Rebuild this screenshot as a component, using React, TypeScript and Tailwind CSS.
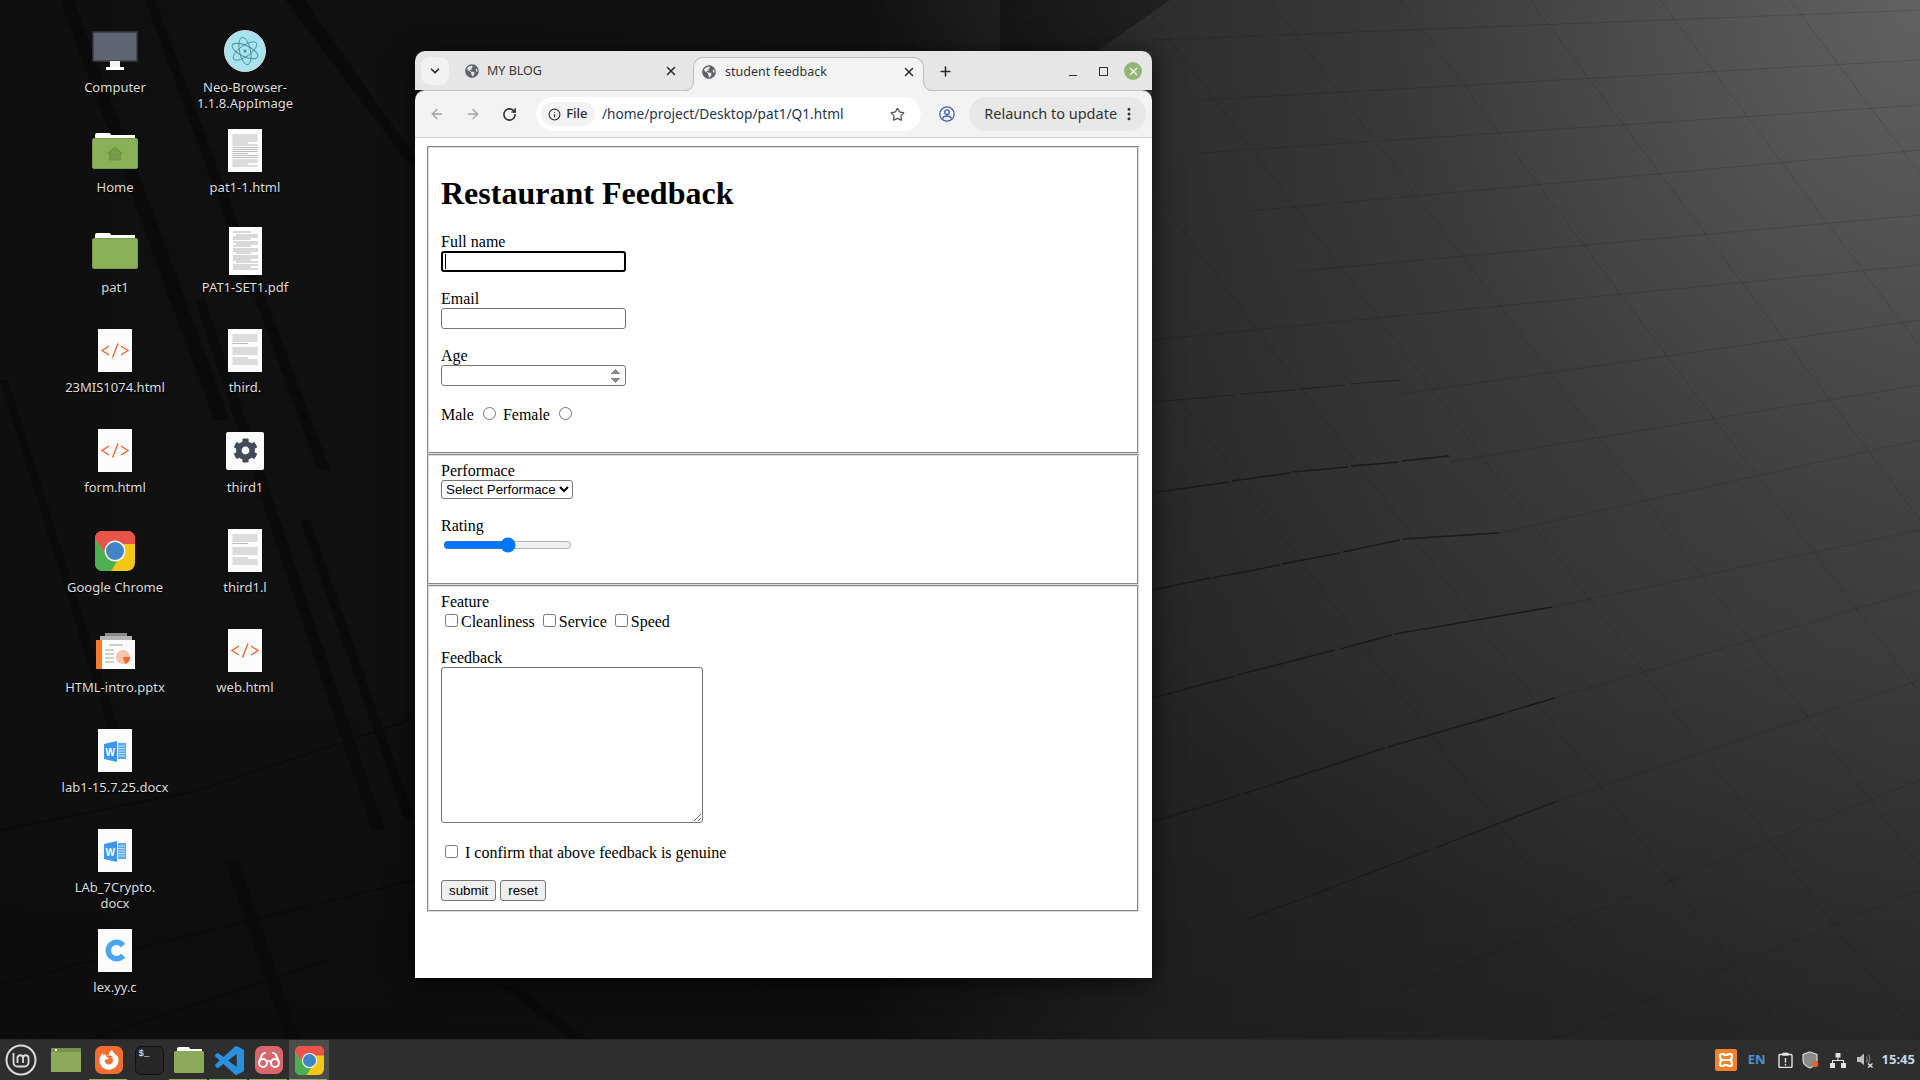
import { ArrowLeft, ArrowRight, ChevronDown, EllipsisVertical, Info, Plus, RotateCw, Star, X } from "lucide-react";
import { FaCog, FaFirefoxBrowser, FaGlobeAmericas } from "react-icons/fa";
import { LuGlasses } from "react-icons/lu";

const uiFont = "font-['Noto_Sans',sans-serif]";

function Wallpaper() {
  // cross lines of the tiled floor on the right half
  const rows = [
    [1152, 40, 1920, 10], [1200, 100, 1920, 60], [1200, 153, 1920, 105], [1250, 211, 1920, 150],
    [1300, 271, 1920, 215], [1152, 340, 1920, 265], [1399, 394, 1920, 320], [1449, 462, 1920, 385],
    [1499, 533, 1920, 440], [1552, 607, 1920, 530], [1555, 698, 1920, 590], [1557, 801, 1920, 680],
    [1400, 990, 1920, 780], [1550, 1040, 1920, 890],
  ];
  const cols = [1000, 1130, 1260, 1390, 1520, 1650, 1780, 1910, 2040, 2170, 2300, 2430, 2560];
  return (
    <svg className="absolute inset-0" width="1920" height="1080">
      <defs>
        <linearGradient id="wall" x1="0" x2="1" y1="0" y2="0">
          <stop offset="0" stopColor="#0f0f0f" />
          <stop offset="0.45" stopColor="#111111" />
          <stop offset="0.6" stopColor="#242424" />
          <stop offset="1" stopColor="#303030" />
        </linearGradient>
        <radialGradient id="shine" gradientUnits="userSpaceOnUse" cx="1920" cy="0" r="1050">
          <stop offset="0" stopColor="#ffffff" stopOpacity="0.24" />
          <stop offset="0.5" stopColor="#ffffff" stopOpacity="0.08" />
          <stop offset="1" stopColor="#ffffff" stopOpacity="0" />
        </radialGradient>
        <linearGradient id="fade" x1="0" x2="0" y1="0" y2="1">
          <stop offset="0.6" stopColor="#000000" stopOpacity="0" />
          <stop offset="1" stopColor="#000000" stopOpacity="0.2" />
        </linearGradient>
      </defs>
      <rect width="1920" height="1080" fill="url(#wall)" />
      <rect width="1920" height="1080" fill="url(#shine)" />
      <rect width="1920" height="1080" fill="url(#fade)" />
      <polygon points="1000,0 1170,0 1070,70 1000,100" fill="#000" opacity="0.3" />

      {/* dark strips on the left */}
      <g fill="#0a0a0a">
        <polygon points="60,0 74,0 230,420 214,420" />
        <polygon points="285,0 305,0 420,165 410,165" />
        <polygon points="145,0 155,0 330,470 318,470" />
        <polygon points="195,300 205,300 385,830 372,830" />
        <polygon points="0,380 8,380 128,760 118,760" />
        <polygon points="300,520 310,520 415,820 405,820" />
        <polygon points="500,985 515,985 590,1040 572,1040" />
        <polygon points="225,860 238,860 300,1040 286,1040" />
      </g>
      <g stroke="#0a0a0a" strokeWidth="1.5" fill="none">
        <path d="M0 830 L200 790 L410 720" />
        <path d="M0 985 L150 945 L415 880" />
        <path d="M90 1040 L330 960" />
      </g>

      {/* tile lines */}
      <g stroke="#000" strokeOpacity="0.13" strokeWidth="1">
        {rows.map(([x1, y1, x2, y2]) => (
          <line key={y1} x1={x1} y1={y1} x2={x2} y2={y2} />
        ))}
        {cols.map((x) => (
          <line key={x} x1={x - 120} y1={0} x2={x + 660} y2={1040} />
        ))}
      </g>

      {/* heavier ledges */}
      <g stroke="#1a1a1a" strokeWidth="1.6" fill="none">
        <path d="M1158 492 L1229 482 M1232 481 L1290 473 M1293 472 L1348 467 M1351 466 L1399 462 M1402 461 L1449 456" />
        <path d="M1152 590 L1210 578 M1212 578 L1280 565 M1282 564 L1340 553 M1343 552 L1400 540 M1403 539 L1499 533" />
        <path d="M1152 698 L1235 676 M1237 675 L1335 650 M1340 649 L1392 635 M1395 634 L1552 607" />
        <path d="M1152 822 L1240 795 M1243 794 L1385 748 M1388 747 L1505 713 M1507 712 L1555 698" />
        <path d="M1246 920 L1430 850 M1435 848 L1557 801" strokeWidth="1.3" />
      </g>
      <path d="M1152 402 L1235 395 M1240 394 L1295 390 M1300 389 L1345 385 M1350 384 L1399 380" stroke="#202020" strokeWidth="1" />
    </svg>
  );
}

function DocIcon({ dense }: { dense?: boolean }) {
  const lines = dense
    ? [6, 8, 10, 12, 14.5, 19, 21, 23, 25, 29, 31, 33, 35]
    : [6, 8, 10, 12, 14, 16, 18.5, 20.5, 22.5, 24.5, 26.5, 28.5, 31, 33, 35, 37];
  return (
    <svg width="34" height="43" viewBox="0 0 34 43">
      <rect width="34" height="43" fill="#fcfcfc" />
      {lines.map((y, i) => (
        <line key={y} x1="4.5" x2={i % 5 === 4 ? 20 : 29.5} y1={y} y2={y} stroke="#b4b4b4" strokeWidth="0.9" />
      ))}
    </svg>
  );
}

function PdfIcon() {
  const lines = [3, 6, 8, 10, 13, 15, 17, 20, 22, 24, 27, 29, 31, 33, 36, 38, 40];
  return (
    <svg width="33" height="48" viewBox="0 0 33 48">
      <rect width="33" height="48" fill="#fff" />
      {lines.map((y, i) => (
        <line key={y} x1={i % 4 === 1 ? 7 : 4} x2={i % 3 === 0 ? 22 : 29} y1={y + 2} y2={y + 2} stroke="#a0a0a0" strokeWidth="0.8" />
      ))}
    </svg>
  );
}

function HtmlIcon() {
  return (
    <svg width="34" height="43" viewBox="0 0 34 43">
      <rect width="34" height="43" fill="#fcfcfc" />
      <g stroke="#f1652f" strokeWidth="1.4" fill="none">
        <path d="M11 17 L4 21.5 L11 26" />
        <path d="M23 17 L30 21.5 L23 26" />
        <path d="M20 14.5 L14.5 28.5" />
      </g>
    </svg>
  );
}

function WordIcon() {
  return (
    <svg width="34" height="43" viewBox="0 0 34 43">
      <rect width="34" height="43" fill="#fcfcfc" />
      <path d="M6 15 L19 12 V33 L6 30 Z" fill="#3f97ea" />
      <path d="M20 14 H28 V30 H20 Z" fill="#5aa8ee" />
      <g stroke="#d7eafa" strokeWidth="0.9">
        {[17, 19.5, 22, 24.5, 27].map((y) => (
          <line key={y} x1="20" x2="27" y1={y} y2={y} />
        ))}
      </g>
      <text x="7.5" y="26.5" fontSize="10" fontWeight="700" fill="#fff" fontFamily="Liberation Sans, sans-serif">W</text>
    </svg>
  );
}

function CIcon() {
  return (
    <svg width="34" height="43" viewBox="0 0 34 43">
      <rect width="34" height="43" fill="#fcfcfc" />
      <path d="M25 16.5 A8.2 8.2 0 1 0 25 26.5" stroke="#4aa5f5" strokeWidth="5.5" fill="none" />
    </svg>
  );
}

function FolderIcon({ home }: { home?: boolean }) {
  return (
    <svg width="46" height="38" viewBox="0 0 46 38">
      <path d="M3 6 V3 Q3 1 5 1 H17 Q19 1 19 3 H43 V8 H3 Z" fill="#fff" />
      <rect x="0.5" y="6.5" width="45" height="30" rx="1.5" fill="#8bb158" stroke="#769a48" />
      {home && <path d="M23 15 L30 21 H28.5 V28 H17.5 V21 H16 Z" fill="#769a48" stroke="#66883d" strokeWidth="0.7" />}
    </svg>
  );
}

function ComputerIcon() {
  return (
    <svg width="46" height="40" viewBox="0 0 46 40">
      <rect x="1" y="1" width="44" height="29" fill="#5f6472" stroke="#383b45" strokeWidth="1.5" />
      <path d="M18 30 H28 V36 H18 Z" fill="#f4f4f4" />
      <rect x="14" y="36" width="18" height="3" fill="#fff" />
    </svg>
  );
}

function ElectronIcon() {
  return (
    <svg width="42" height="42" viewBox="0 0 42 42">
      <circle cx="21" cy="21" r="20.5" fill="#a8e3ef" stroke="#d9d9d9" />
      <g stroke="#4c8d9f" strokeWidth="0.9" fill="none">
        <ellipse cx="21" cy="21" rx="14" ry="5.5" transform="rotate(25 21 21)" />
        <ellipse cx="21" cy="21" rx="14" ry="5.5" transform="rotate(-35 21 21)" />
        <ellipse cx="21" cy="21" rx="5.5" ry="14" transform="rotate(-12 21 21)" />
      </g>
      <circle cx="21" cy="21" r="1.5" fill="#4c8d9f" />
    </svg>
  );
}

function ChromeIcon({ size }: { size: number }) {
  return (
    <svg width={size} height={size} viewBox="0 0 40 40">
      <rect width="40" height="40" rx="8" fill="#f5c518" />
      <path d="M0 8 Q0 0 8 0 H32 Q40 0 40 8 V13 H20 L12 25 L0 8 Z" fill="#e8534a" />
      <path d="M0 8 L13 26 L23 29 L16 40 H8 Q0 40 0 32 Z" fill="#4caf50" />
      <circle cx="20" cy="20" r="10.5" fill="#f4f4f4" />
      <circle cx="20" cy="20" r="9" fill="#4285c4" />
    </svg>
  );
}

function PptIcon() {
  return (
    <svg width="39" height="36" viewBox="0 0 39 36">
      <rect x="9" y="0" width="22" height="5" fill="#8a8a8a" />
      <rect x="4" y="3" width="32" height="5" fill="#b5b5b5" />
      <rect x="0" y="7" width="39" height="29" fill="#fafafa" />
      <rect x="0" y="7" width="6" height="29" fill="#f47b2a" />
      <g stroke="#9a9a9a" strokeWidth="0.9">
        <line x1="13" x2="27" y1="12" y2="12" />
        <line x1="9" x2="18" y1="17" y2="17" />
        <line x1="9" x2="18" y1="21" y2="21" />
        <line x1="9" x2="18" y1="25" y2="25" />
        <line x1="9" x2="18" y1="29" y2="29" />
      </g>
      <circle cx="27" cy="24" r="7" fill="#f6c4aa" />
      <path d="M27 24 H34 A7 7 0 0 1 29 31 Z" fill="#f0682e" />
    </svg>
  );
}

function GearIcon() {
  return (
    <div className="flex h-[38px] w-[38px] items-center justify-center rounded-[2px] bg-[#fbfbfb]">
      <FaCog size={25} color="#414b5a" />
    </div>
  );
}

function DesktopItem({ icon, label }: { icon: React.ReactNode; label: React.ReactNode }) {
  return (
    <div className="flex h-[100px] w-[130px] flex-col items-center pt-[26px]">
      <div className="flex h-[49px] shrink-0 items-center justify-center">{icon}</div>
      <div className="mt-[4px] shrink-0 text-center text-[13px] leading-[16px] text-[#dcdcdc] [text-shadow:0_1px_1px_#000]">{label}</div>
    </div>
  );
}

function DesktopIcons() {
  const left = [
    { icon: <ComputerIcon />, label: "Computer" },
    { icon: <FolderIcon home />, label: "Home" },
    { icon: <FolderIcon />, label: "pat1" },
    { icon: <HtmlIcon />, label: "23MIS1074.html" },
    { icon: <HtmlIcon />, label: "form.html" },
    { icon: <ChromeIcon size={40} />, label: "Google Chrome" },
    { icon: <PptIcon />, label: "HTML-intro.pptx" },
    { icon: <WordIcon />, label: "lab1-15.7.25.docx" },
    { icon: <WordIcon />, label: <>LAb_7Crypto.<br />docx</> },
    { icon: <CIcon />, label: "lex.yy.c" },
  ];
  const right = [
    { icon: <ElectronIcon />, label: <>Neo-Browser-<br />1.1.8.AppImage</> },
    { icon: <DocIcon />, label: "pat1-1.html" },
    { icon: <PdfIcon />, label: "PAT1-SET1.pdf" },
    { icon: <DocIcon dense />, label: "third." },
    { icon: <GearIcon />, label: "third1" },
    { icon: <DocIcon dense />, label: "third1.l" },
    { icon: <HtmlIcon />, label: "web.html" },
  ];
  return (
    <div className={`relative flex flex-1 pl-[50px] ${uiFont}`}>
      <div>
        {left.map((item, i) => (
          <DesktopItem key={i} icon={item.icon} label={item.label} />
        ))}
      </div>
      <div>
        {right.map((item, i) => (
          <DesktopItem key={i} icon={item.icon} label={item.label} />
        ))}
      </div>
    </div>
  );
}

function TabFlare({ side }: { side: "left" | "right" }) {
  return (
    <svg
      className={`absolute bottom-0 ${side === "left" ? "-left-[10px]" : "-right-[10px] -scale-x-100"}`}
      width="10"
      height="10"
      viewBox="0 0 10 10"
    >
      <path d="M10 0 V10 H0 Q9.5 10 9.5 0 Z" fill="#f3f3f3" />
      <path d="M0 9.5 Q9.5 9.5 9.5 0" fill="none" stroke="#bdbdbd" />
    </svg>
  );
}

function BrowserChrome() {
  return (
    <div className={`text-[#2b2b2b] ${uiFont}`}>
      <div className="flex h-[39px] items-end rounded-t-[10px] bg-[#e6e6e6] pl-[6px]">
        <div className="mb-[5px] flex h-[28px] w-[28px] items-center justify-center rounded-[9px] bg-[#f2f2f2]">
          <ChevronDown size={14} strokeWidth={3} />
        </div>
        <div className="mb-[5px] flex h-[28px] w-[244px] items-center pl-[16px] pr-[15px]">
          <FaGlobeAmericas size={14} color="#5f6368" />
          <span className="ml-[8px] flex-1 text-[12.5px] text-[#3a3a3a]">MY BLOG</span>
          <X size={14} strokeWidth={2.5} />
        </div>
        <div className="relative z-10 -mb-px flex h-[34px] w-[231px] items-center rounded-t-[10px] border border-b-0 border-[#bdbdbd] bg-[#f3f3f3] pb-[5px] pl-[8px] pr-[7px]">
          <TabFlare side="left" />
          <TabFlare side="right" />
          <FaGlobeAmericas size={14} color="#5f6368" />
          <span className="ml-[9px] flex-1 text-[12.5px] text-[#333]">student feedback</span>
          <X size={14} strokeWidth={2.5} />
        </div>
        <div className="mb-[11px] ml-[14px]">
          <Plus size={15} strokeWidth={2.5} />
        </div>
        <div className="mb-[5px] ml-auto flex h-[28px] items-center pr-[10px]">
          <div className="mt-[9px] h-[1.5px] w-[8px] bg-[#333]" />
          <div className="ml-[22px] h-[9px] w-[9px] border border-[#333]" />
          <div className="ml-[16px] flex h-[18px] w-[18px] items-center justify-center rounded-full bg-[#94b573]">
            <X size={13} strokeWidth={2} color="#fff" />
          </div>
        </div>
      </div>

      <div className="flex h-[48px] items-center rounded-t-[10px] border-y border-t-[#c2c2c2] border-b-[#cfcfcf] bg-[#f3f3f3] pl-[14px] pr-[6px]">
        <ArrowLeft size={16} color="#a3a3a3" />
        <ArrowRight size={16} color="#a3a3a3" className="ml-[20px]" />
        <RotateCw size={15} strokeWidth={2.5} color="#2f2f2f" className="ml-[21px]" />
        <div className="ml-[19px] flex h-[34px] w-[386px] items-center rounded-full bg-white pl-[5px] pr-[16px]">
          <div className="flex h-[24px] w-[54px] items-center justify-center gap-[5px] rounded-full bg-[#f3f3f3] text-[13px] font-medium">
            <Info size={13} />
            File
          </div>
          <span className="ml-[7px] flex-1 text-[13.7px] text-[#1f3550]">/home/project/Desktop/pat1/Q1.html</span>
          <Star size={15} color="#555" />
        </div>
        <svg className="ml-[18px]" width="16" height="16" viewBox="0 0 16 16" fill="none" stroke="#3f63ad" strokeWidth="1.3">
          <circle cx="8" cy="8" r="7.2" />
          <circle cx="8" cy="6.2" r="2.3" />
          <path d="M3.5 12.6 Q4.5 10 8 10 T12.5 12.6" />
        </svg>
        <div className="ml-[14px] flex h-[34px] w-[177px] items-center rounded-full bg-[#e8e8e8] pl-[15px] text-[14.5px] text-[#333]">
          <span className="flex-1">Relaunch to update</span>
          <EllipsisVertical size={16} strokeWidth={2.5} className="mr-[9px]" />
        </div>
      </div>
    </div>
  );
}

function FeedbackPage() {
  const fieldset = "[border:2px_groove_#dcdcdc] px-[12px] pt-[5.6px] min-w-0";
  const textInput = "w-[185px] h-[21px] border border-[#767676] rounded-[3px] bg-white";
  const radio = "[margin:3px_3px_0px_5px]";
  const check = "[margin:3px_3px_3px_4px]";
  const button = "h-[21px] border border-[#767676] rounded-[3px] bg-[#efefef] px-[7px] text-[13.333px] font-['Liberation_Sans',sans-serif]";
  return (
    <div className="flex-1 bg-white pl-[12px] pr-[13px] pt-[8px] font-['Liberation_Serif',serif] text-[16px] text-black [line-height:normal]">
      <form>
        <fieldset className={`${fieldset} pb-[10px]`}>
          <h1 className="my-[21.44px] text-[32px] font-bold [line-height:normal]">Restaurant Feedback</h1>
          <label>Full name</label>
          <br />
          <span className="relative inline-block h-[21px] align-bottom">
            <input type="text" className="h-[21px] w-[185px] rounded-[3px] border-2 border-black bg-white align-top" />
            <span className="absolute left-[4px] top-[3px] h-[15px] w-px bg-black" />
          </span>
          <br />
          <br />
          <label>Email</label>
          <br />
          <input type="email" className={`${textInput} align-bottom`} />
          <br />
          <br />
          <label>Age</label>
          <br />
          <input type="number" className={`${textInput} align-bottom [&::-webkit-inner-spin-button]:mr-[2px] [&::-webkit-inner-spin-button]:opacity-100`} />
          <br />
          <br />
          <label>Male</label> <input type="radio" name="g" className={radio} /> <label>Female</label>{" "}
          <input type="radio" name="g" className={radio} />
          <br />
          <br />
        </fieldset>
        <fieldset className={`${fieldset} pb-[8.4px]`}>
          <label>Performace</label>
          <br />
          <select className="w-[132px] rounded-[3px] border border-[#767676] bg-white font-['Liberation_Sans',sans-serif] text-[13.333px]">
            <option>Select Performace</option>
          </select>
          <br />
          <br />
          <label>Rating</label>
          <br />
          <input type="range" className="[margin:2px]" />
          <br />
          <br />
        </fieldset>
        <fieldset className={`${fieldset} pb-[9px]`}>
          <label>Feature</label>
          <br />
          <input type="checkbox" className={check} />
          Cleanliness <input type="checkbox" className={check} />
          Service <input type="checkbox" className={check} />
          Speed
          <br />
          <br />
          <label>Feedback</label>
          <br />
          <textarea className="h-[156px] w-[262px] rounded-[3px] border border-[#767676] bg-white align-text-bottom" />
          <br />
          <br />
          <input type="checkbox" className={check} /> I confirm that above feedback is genuine
          <br />
          <br />
          <button type="button" className={button}>submit</button>{" "}
          <button type="button" className={button}>reset</button>
        </fieldset>
      </form>
    </div>
  );
}

function TaskIcon({ children, underline, active }: { children: React.ReactNode; underline?: boolean; active?: boolean }) {
  return (
    <div className={`relative flex h-[41px] w-[40px] items-center justify-center ${active ? "bg-[#4c4c4c]" : ""}`}>
      {children}
      {underline && <div className="absolute bottom-0 left-0 h-[2px] w-[38px] bg-[#8dae62]" />}
    </div>
  );
}

function Taskbar() {
  return (
    <div className={`relative flex h-[41px] items-center border-t border-[#262626] bg-[#2e2e2e] ${uiFont}`}>
      <div className="flex w-[49px] justify-center pr-[7px]">
        <svg width="32" height="32" viewBox="0 0 32 32" fill="none" stroke="#dcdcdc">
          <circle cx="16" cy="16" r="14.5" strokeWidth="2" />
          <path d="M8.5 9 V18.5 A4 4 0 0 0 12.5 22.5 H19.5 A4 4 0 0 0 23.5 18.5 V13.5 A2.8 2.8 0 0 0 18 13.5 V19 M18 13.5 A2.8 2.8 0 0 0 12.5 13.5 V19" strokeWidth="1.8" />
        </svg>
      </div>
      <TaskIcon>
        <svg width="30" height="24" viewBox="0 0 30 24" className="-ml-[6px]">
          <rect width="30" height="24" fill="#8bab5b" />
          <rect width="30" height="4" fill="#75934c" />
          <rect x="4" y="1" width="2" height="2" fill="#fff" />
        </svg>
      </TaskIcon>
      <TaskIcon underline>
        <div className="flex h-[28px] w-[28px] items-center justify-center rounded-[7px] bg-[#f46d30]">
          <FaFirefoxBrowser size={20} color="#fff" />
        </div>
      </TaskIcon>
      <TaskIcon>
        <div className="h-[29px] w-[29px] rounded-[6px] border border-[#111] bg-[#272727] pl-[3px] pt-[1px] font-['Liberation_Mono',monospace] text-[9px] leading-[12px] text-white">$_</div>
      </TaskIcon>
      <TaskIcon underline>
        <svg width="30" height="26" viewBox="0 0 30 26">
          <path d="M3 5 V2 Q3 0 5 0 H14 Q16 0 16 2 H28 V6 H3 Z" fill="#fff" />
          <rect y="4" width="30" height="22" rx="1.5" fill="#8bab5b" />
        </svg>
      </TaskIcon>
      <TaskIcon underline>
        <svg width="29" height="29" viewBox="0 0 24 24">
          <path fill="#2a8fdc" d="M23.15 2.587L18.21.21a1.494 1.494 0 0 0-1.705.29l-9.46 8.63-4.12-3.128a.999.999 0 0 0-1.276.057L.327 7.261A1 1 0 0 0 .326 8.74L3.899 12 .326 15.26a1 1 0 0 0 .001 1.479L1.65 17.94a.999.999 0 0 0 1.276.057l4.12-3.128 9.46 8.63a1.492 1.492 0 0 0 1.704.29l4.942-2.377A1.5 1.5 0 0 0 24 20.06V3.939a1.5 1.5 0 0 0-.85-1.352zm-5.146 14.861L10.826 12l7.178-5.448v10.896z" />
        </svg>
      </TaskIcon>
      <TaskIcon underline>
        <div className="flex h-[28px] w-[28px] items-center justify-center rounded-[7px] bg-[#d9666a]">
          <LuGlasses size={24} color="#fff" strokeWidth={2} />
        </div>
      </TaskIcon>
      <TaskIcon underline active>
        <ChromeIcon size={29} />
      </TaskIcon>

      <div className="ml-auto flex items-center pr-[5px]">
        <svg width="22" height="22" viewBox="0 0 22 22">
          <rect width="22" height="22" rx="2" fill="#f5822a" />
          <path d="M5 6.5 Q5 5 7 5 H8 Q11 7 14 5 H15 Q17 5 17 6.5 V8 Q15 11 17 14 V15.5 Q17 17 15 17 H14 Q11 15 8 17 H7 Q5 17 5 15.5 V14 Q7 11 5 8 Z" fill="none" stroke="#fff" strokeWidth="2.2" />
          <line x1="5" x2="17" y1="11" y2="11" stroke="#fff" strokeWidth="2" />
        </svg>
        <span className="ml-[11px] text-[13px] font-bold text-[#4b94cf]">EN</span>
        <svg className="ml-[12px]" width="15" height="16" viewBox="0 0 15 16" fill="none" stroke="#e4e4e4" strokeWidth="1.4">
          <rect x="1" y="2.5" width="13" height="13" rx="1" />
          <rect x="4.5" y="0.7" width="6" height="3" fill="#e4e4e4" stroke="none" />
          <path d="M7.5 6 V10.5 M7.5 11.8 V13.5" />
        </svg>
        <svg className="ml-[9px]" width="18" height="18" viewBox="0 0 18 18">
          <path d="M8 1 L15 3.5 V9 Q15 14 8 17 Q1 14 1 9 V3.5 Z" fill="#8a8a8a" stroke="#d8d8d8" strokeWidth="1.2" />
          <circle cx="13" cy="13" r="3.2" fill="#e0672c" />
        </svg>
        <svg className="ml-[10px]" width="16" height="15" viewBox="0 0 16 15" fill="#e4e4e4">
          <rect x="5.5" y="0" width="5" height="4.5" />
          <rect x="0" y="10" width="5" height="5" />
          <rect x="11" y="10" width="5" height="5" />
          <path d="M7.5 4 H8.5 V7 H14 V10 H13 V8 H3 V10 H2 V7 H7.5 Z" />
        </svg>
        <svg className="ml-[10px]" width="18" height="16" viewBox="0 0 18 16">
          <path d="M1 5 H4 L8 1.5 V13 L4 10 H1 Z" fill="#bdbdbd" />
          <path d="M10.5 4.5 Q12 7.5 10.5 10.5 M12.5 2.5 Q15 7 12.5 11" stroke="#777" strokeWidth="1.3" fill="none" />
          <path d="M12 11.5 L16.5 15.5 M16.5 11.5 L12 15.5" stroke="#e4e4e4" strokeWidth="1.4" />
        </svg>
        <span className="ml-[8px] text-[13px] font-bold text-[#c3d6e6]">15:45</span>
      </div>
    </div>
  );
}

export default function App() {
  return (
    <div className="relative flex h-[1080px] w-[1920px] flex-col overflow-hidden bg-[#0f0f0f]">
      <Wallpaper />
      <DesktopIcons />
      <div className="absolute left-[415px] top-[51px] flex h-[927px] w-[737px] flex-col shadow-[0_4px_24px_rgba(0,0,0,0.7)]">
        <BrowserChrome />
        <FeedbackPage />
      </div>
      <Taskbar />
    </div>
  );
}
